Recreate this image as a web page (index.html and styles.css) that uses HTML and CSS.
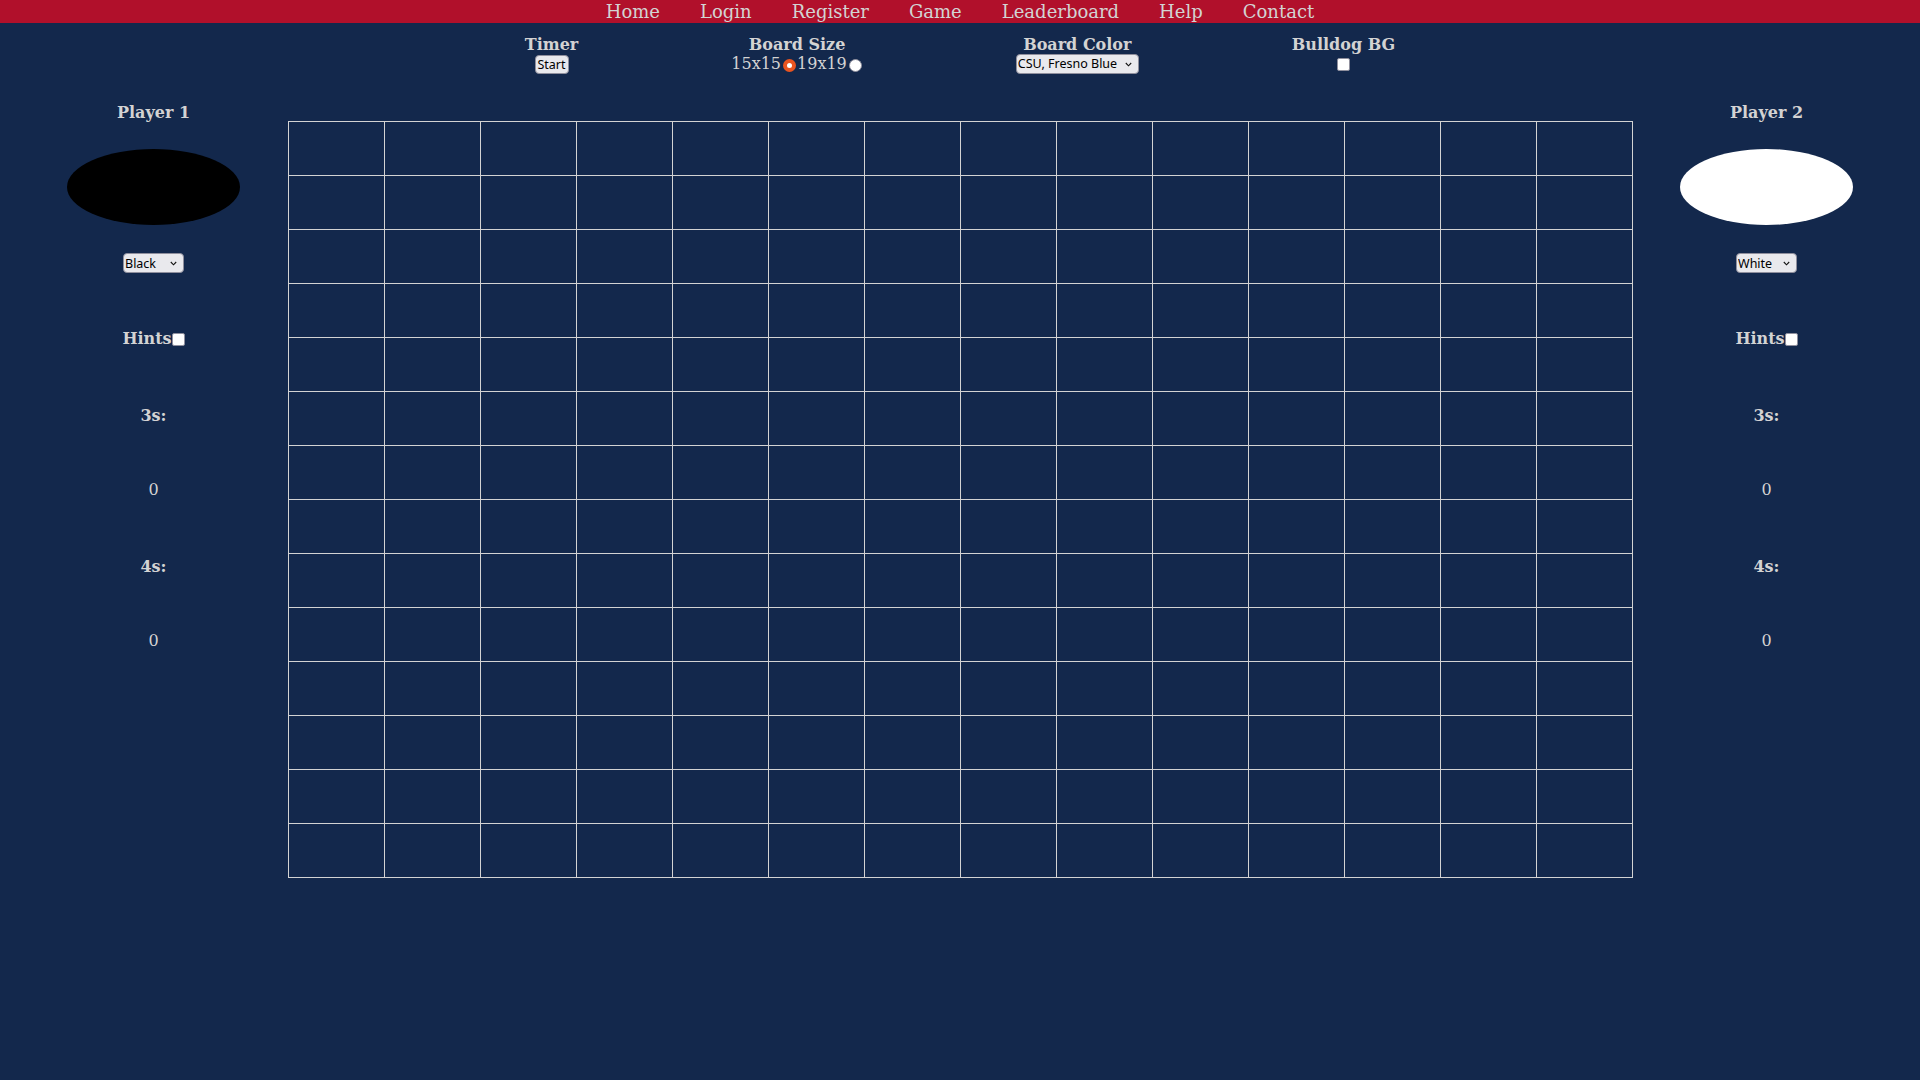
FILE: index.html
```html
<!DOCTYPE html>
<html lang="en">
<head>
<meta charset="utf-8">
<title>Gomoku</title>
<link rel="stylesheet" href="styles.css">
</head>
<body>
<nav class="nav">
  <a href="#">Home</a>
  <a href="#">Login</a>
  <a href="#">Register</a>
  <a href="#">Game</a>
  <a href="#">Leaderboard</a>
  <a href="#">Help</a>
  <a href="#">Contact</a>
</nav>

<section class="controls">
  <div class="control">
    <div class="label">Timer</div>
    <div class="row"><button class="btn">Start</button></div>
  </div>
  <div class="control">
    <div class="label">Board Size</div>
    <div class="row">15x15<input type="radio" class="radio" name="size" checked>19x19<input type="radio" class="radio" name="size"></div>
  </div>
  <div class="control">
    <div class="label">Board Color</div>
    <div class="row">
      <span class="sel sel-wide"><select><option>CSU, Fresno Blue</option></select><svg class="chev" width="7" height="5" viewBox="0 0 7 5"><path d="M0.8 1 L3.5 3.8 L6.2 1" fill="none" stroke="#111" stroke-width="1.1"/></svg></span>
    </div>
  </div>
  <div class="control">
    <div class="label">Bulldog BG</div>
    <div class="row"><input type="checkbox" class="check"></div>
  </div>
</section>

<main class="main">
  <aside class="panel panel-left">
    <div class="label">Player 1</div>
    <div class="stone stone-black"></div>
    <span class="sel sel-small"><select><option>Black</option><option>White</option></select><svg class="chev" width="7" height="5" viewBox="0 0 7 5"><path d="M0.8 1 L3.5 3.8 L6.2 1" fill="none" stroke="#111" stroke-width="1.1"/></svg></span>
    <div class="label hints">Hints<input type="checkbox" class="check"></div>
    <div class="label gap58">3s:</div>
    <div class="count">0</div>
    <div class="label gap58">4s:</div>
    <div class="count">0</div>
  </aside>

  <div class="board" id="board"></div>

  <aside class="panel panel-right">
    <div class="label">Player 2</div>
    <div class="stone stone-white"></div>
    <span class="sel sel-small"><select><option>White</option><option>Black</option></select><svg class="chev" width="7" height="5" viewBox="0 0 7 5"><path d="M0.8 1 L3.5 3.8 L6.2 1" fill="none" stroke="#111" stroke-width="1.1"/></svg></span>
    <div class="label hints">Hints<input type="checkbox" class="check"></div>
    <div class="label gap58">3s:</div>
    <div class="count">0</div>
    <div class="label gap58">4s:</div>
    <div class="count">0</div>
  </aside>
</main>

<script>
  var b = document.getElementById('board');
  for (var i = 0; i < 196; i++) {
    var c = document.createElement('div');
    c.className = 'cell';
    b.appendChild(c);
  }
</script>
</body>
</html>
```

FILE: styles.css
```css
html, body {
  margin: 0;
  padding: 0;
}
body {
  background: #13284c;
  color: #d3d3d3;
  font-family: "DejaVu Serif", serif;
  font-size: 16px;
  line-height: 19px;
  min-height: 1080px;
}

.nav {
  height: 23px;
  background: #b1102b;
  display: flex;
  justify-content: center;
  gap: 40px;
  font-size: 18px;
  line-height: 23px;
}
.nav a {
  color: #d3d3d3;
  text-decoration: none;
}

.controls {
  display: flex;
  justify-content: center;
  gap: 153px;
  margin-top: 12px;
}
.control {
  display: flex;
  flex-direction: column;
  align-items: center;
}
.label {
  font-weight: bold;
  line-height: 19px;
}
.row {
  height: 19px;
  line-height: 19px;
  white-space: nowrap;
  display: flex;
  align-items: center;
}

.btn {
  font-family: "Noto Sans", "DejaVu Sans", sans-serif;
  font-size: 12.5px;
  height: 19px;
  width: 34px;
  padding: 0;
  margin: 1px 0 0 0;
  background: #e9e9ed;
  color: #000;
  border: 1px solid #8f8f9d;
  border-radius: 4px;
  line-height: 15px;
}

.radio {
  appearance: none;
  -webkit-appearance: none;
  width: 13px;
  height: 13px;
  margin: 4px 1px 0 2px;
  border-radius: 50%;
  background: #fff;
  border: 1.5px solid #8f8f9d;
  box-sizing: border-box;
}
.radio:checked {
  background: #fff;
  border: 4px solid #e95420;
}

.check {
  appearance: none;
  -webkit-appearance: none;
  width: 13px;
  height: 13px;
  margin: 0;
  background: #fff;
  border: 1.5px solid #8f8f9d;
  border-radius: 2px;
  box-sizing: border-box;
}
.control .check {
  margin-top: 2px;
}

.sel {
  position: relative;
  display: inline-block;
  height: 20px;
}
.sel select {
  appearance: none;
  -webkit-appearance: none;
  height: 20px;
  box-sizing: border-box;
  font-family: "Noto Sans", "DejaVu Sans", sans-serif;
  font-size: 12.5px;
  color: #000;
  background: #e9e9ed;
  border: 1px solid #8f8f9d;
  border-radius: 4px;
  padding: 0 0 0 1px;
  margin: 0;
  display: block;
}
.sel-wide select { width: 123px; }
.sel-small select { width: 61px; }
.chev {
  position: absolute;
  right: 7px;
  top: 8px;
  pointer-events: none;
}

.main {
  display: flex;
  align-items: flex-start;
  margin-top: 30px;
}
.panel {
  width: 288px;
  box-sizing: border-box;
  display: flex;
  flex-direction: column;
  align-items: center;
}
.panel-left { padding-left: 19px; }
.panel-right { width: 287px; padding-right: 20px; }

.stone {
  width: 173px;
  height: 76px;
  border-radius: 50%;
  margin-top: 27px;
}
.stone-black { background: #000; }
.stone-white { background: #fff; }

.panel .sel { margin-top: 28px; }

.hints {
  margin-top: 56px;
  display: flex;
  align-items: flex-end;
}
.hints .check {
  margin-bottom: 2px;
}
.gap58 { margin-top: 58px; }
.count { margin-top: 55px; }

.board {
  margin-top: 18px;
  display: grid;
  grid-template-columns: repeat(14, 96px);
  grid-auto-rows: 54px;
  border-left: 1px solid #d3d3d3;
  border-top: 1px solid #d3d3d3;
}
.cell {
  border-right: 1px solid #d3d3d3;
  border-bottom: 1px solid #d3d3d3;
  box-sizing: border-box;
}
```
